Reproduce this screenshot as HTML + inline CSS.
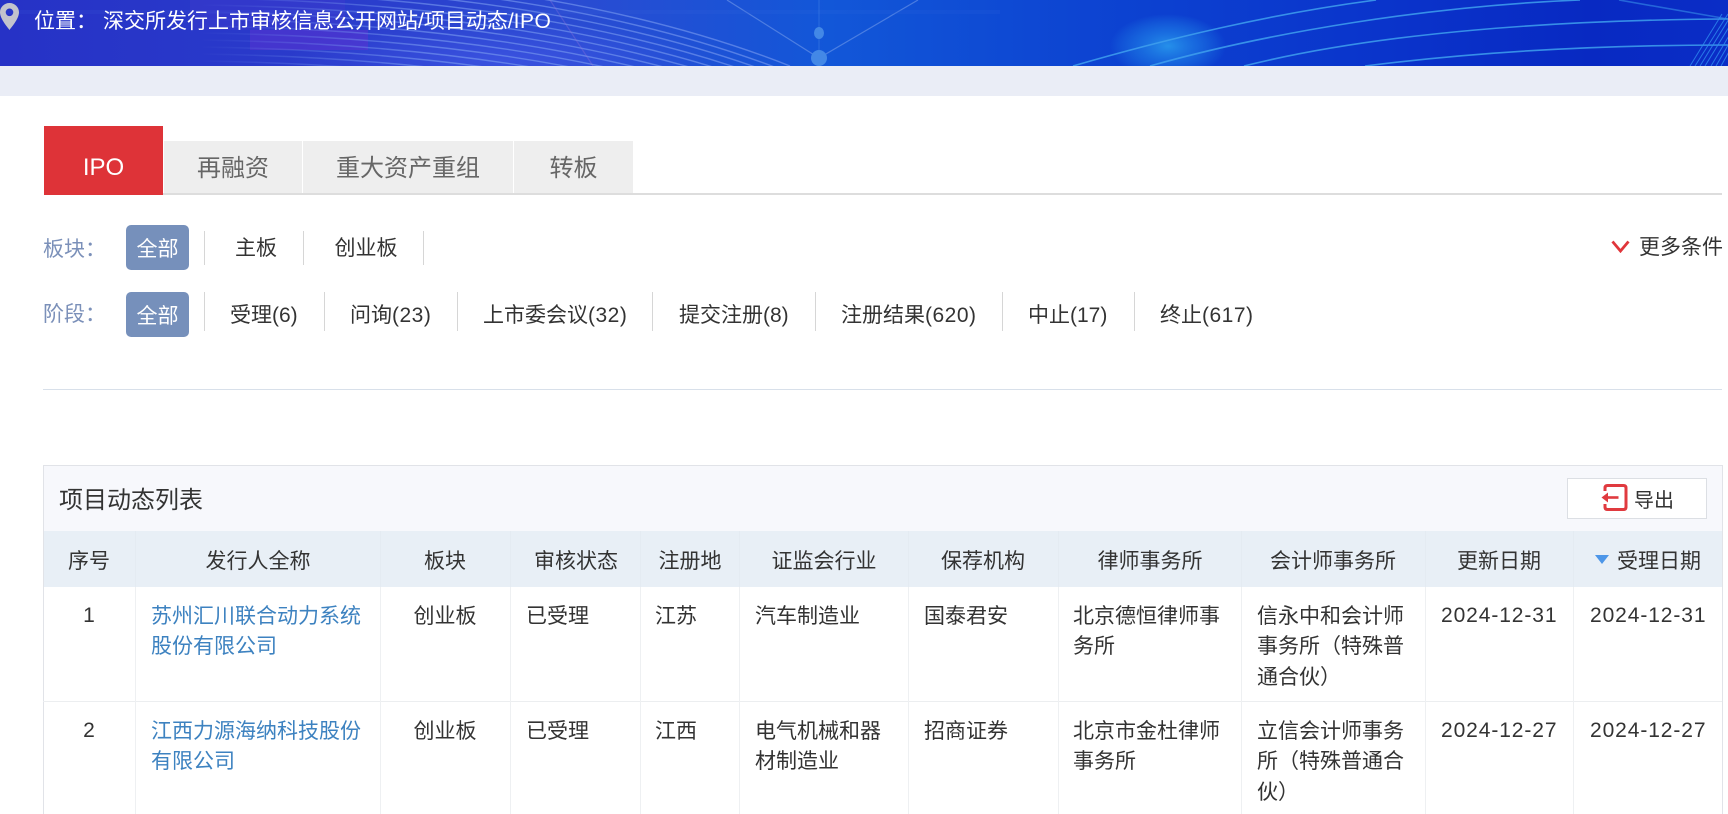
<!DOCTYPE html>
<html lang="zh-CN">
<head>
<meta charset="utf-8">
<title>项目动态</title>
<style>
html,body{margin:0;padding:0;background:#fff;}
body{width:1728px;height:814px;overflow:hidden;position:relative;font-family:"Liberation Sans","Noto Sans CJK SC",sans-serif;font-size:21px;color:#333;}
.a,.t,.c,.b{position:absolute;}
.t{white-space:nowrap;line-height:30px;}
.c{white-space:nowrap;line-height:30px;transform:translateX(-50%);}
.v{position:absolute;width:1px;background:#d6d6d6;}
.g{position:absolute;width:1px;background:#eef0f2;top:587px;height:227px;}
.h{position:absolute;width:1px;background:#e4ebf2;top:531px;height:56px;}
.tab{position:absolute;top:141px;height:52px;background:#eeeeee;color:#666;font-size:24px;line-height:56px;text-align:center;}
.btn{position:absolute;left:126px;width:63px;height:45px;background:#7690bb;border-radius:5px;color:#fff;text-align:center;line-height:49px;}
.l{color:#7b90b9;}
.k{color:#3d82c0;}
.n{letter-spacing:.5px;}
.d{letter-spacing:.9px;}
.m{line-height:30.4px;}
</style>
</head>
<body>
<svg class="a" style="left:0;top:0" width="1728" height="66" viewBox="0 0 1728 66" fill="none">
<defs>
<linearGradient id="bg" x1="0" x2="1" y1="0" y2="0">
<stop offset="0" stop-color="#2632c6"/>
<stop offset=".2" stop-color="#2a3ccc"/>
<stop offset=".33" stop-color="#2a4bd2"/>
<stop offset=".48" stop-color="#1257d8"/>
<stop offset=".62" stop-color="#0d45d2"/>
<stop offset=".8" stop-color="#0a34cb"/>
<stop offset=".92" stop-color="#0829c2"/>
<stop offset="1" stop-color="#0a2dc6"/>
</linearGradient>
<linearGradient id="sg" gradientUnits="userSpaceOnUse" x1="200" x2="430" y1="0" y2="0"><stop offset="0" stop-color="#7a9cf0" stop-opacity="0"/><stop offset="1" stop-color="#7a9cf0" stop-opacity=".6"/></linearGradient>
<radialGradient id="gl"><stop offset="0" stop-color="#2590ea"/><stop offset=".5" stop-color="#1c78e4" stop-opacity=".7"/><stop offset="1" stop-color="#1f82e6" stop-opacity="0"/></radialGradient>
<radialGradient id="gp"><stop offset="0" stop-color="#3f55e4" stop-opacity=".75"/><stop offset="1" stop-color="#3f55e4" stop-opacity="0"/></radialGradient>
</defs>
<rect width="1728" height="66" fill="url(#bg)"/>
<ellipse cx="500" cy="60" rx="210" ry="40" fill="url(#gp)"/>
<ellipse cx="1168" cy="46" rx="58" ry="32" fill="url(#gl)"/>
<rect x="190" y="0" width="155" height="30" fill="#4e38ce" opacity=".25"/>
<rect x="250" y="30" width="118" height="20" fill="#5f30d2" opacity=".5"/>
<g stroke="url(#sg)" stroke-width="1.4">
<path d="M200 -30Q560 -25 790 66"/>
<path d="M200 -23Q560 -18 790 73"/>
<path d="M200 -16Q560 -11 790 80"/>
<path d="M200 -9Q560 -4 790 87"/>
<path d="M200 -2Q560 3 790 94"/>
<path d="M200 5Q560 10 790 101"/>
<path d="M200 12Q560 17 790 108"/>
<path d="M200 19Q560 24 790 115"/>
<path d="M200 26Q560 31 790 122"/>
<path d="M200 33Q560 38 790 129"/>
<path d="M200 40Q560 45 790 136"/>
<path d="M200 47Q560 52 790 143"/>
<path d="M200 54Q560 59 790 150"/>
<path d="M200 61Q560 66 790 157"/>
</g>
<g stroke="#8fb0f0" stroke-width="1.2" opacity=".45">
<path d="M727 0L819 58L918 0"/>
<path d="M550 0L593 66" stroke="#9a78dc" opacity=".7"/>
<path d="M0 12H1000" stroke="#4a7ae8" opacity=".2" stroke-width="4"/>
</g>
<path d="M819 0V66" stroke="#5a96ec" stroke-width="1" opacity=".35"/>
<g fill="#4388e6">
<ellipse cx="819" cy="33" rx="5" ry="6"/>
<circle cx="819" cy="58" r="8"/>
</g>
<g stroke-width="1.6" stroke="#3fa0ee" opacity=".85">
<path d="M1073 66C1170 38 1270 14 1376 0"/>
<path d="M1150 66C1270 32 1430 6 1580 0"/>
<path d="M1244 66C1380 32 1560 20 1728 19"/>
<path d="M1365 66C1490 50 1610 45 1728 45"/>
<path d="M1619 0L1728 19" opacity=".6"/>
</g>
<g stroke="#2f8cf0" stroke-width="1" opacity=".8">
<path d="M1690 66L1722 14M1695 66L1728 14M1700 66L1732 14M1705 66L1737 14M1711 66L1742 14M1716 66L1746 14M1721 66L1750 14"/>
</g>
</svg>
<svg class="a" style="left:0;top:3px" width="20" height="28" viewBox="0 0 20 28"><path fill-rule="evenodd" d="M9.5 0C14.8 0 19 4.100 19 9.300C19 15.500 12.500 23 9.500 27C6.500 23 0 15.500 0 9.300C0 4.100 4.200 0 9.500 0ZM9.500 5.500A3.800 3.800 0 1 0 9.500 13.100A3.800 3.800 0 0 0 9.500 5.500Z" fill="#c2c3cd"/></svg>
<span class="t" style="left:34px;top:7px;color:#fff">位置：</span>
<span class="t" style="left:103px;top:7px;color:#fff">深交所发行上市审核信息公开网站/项目动态/<span class="n">IPO</span></span>

<div class="a" style="left:0;top:66px;width:1728px;height:30px;background:#eaedf6"></div>

<div class="a" style="left:44px;top:193px;width:1678px;height:2px;background:#dddddd"></div>
<div class="a" style="left:44px;top:126px;width:119px;height:69px;background:#de3338;color:#fff;font-size:24px;line-height:83px;text-align:center">IPO</div>
<div class="tab" style="left:164px;width:138px">再融资</div>
<div class="tab" style="left:303px;width:210px">重大资产重组</div>
<div class="tab" style="left:514px;width:119px">转板</div>

<span class="t l" style="left:43px;top:235px">板块：</span>
<div class="btn" style="top:225px">全部</div>
<div class="v" style="left:204px;top:231px;height:34px"></div>
<span class="c" style="left:256px;top:234px">主板</span>
<div class="v" style="left:303px;top:231px;height:34px"></div>
<span class="c" style="left:366px;top:234px">创业板</span>
<div class="v" style="left:423px;top:231px;height:34px"></div>

<svg class="a" style="left:1611px;top:240px" width="19" height="13" viewBox="0 0 19 13" fill="none"><path d="M1.500 1.500L9.500 11L17.500 1.500" stroke="#e0353a" stroke-width="2.800"/></svg>
<span class="t" style="left:1639px;top:233px">更多条件</span>

<span class="t l" style="left:43px;top:300px">阶段：</span>
<div class="btn" style="top:292px">全部</div>
<div class="v" style="left:204px;top:292px;height:39px"></div>
<span class="t" style="left:230px;top:301px">受理(6)</span>
<div class="v" style="left:324px;top:292px;height:39px"></div>
<span class="t" style="left:350px;top:301px">问询<span class="n">(23)</span></span>
<div class="v" style="left:457px;top:292px;height:39px"></div>
<span class="t" style="left:483px;top:301px">上市委会议<span class="n">(32)</span></span>
<div class="v" style="left:652px;top:292px;height:39px"></div>
<span class="t" style="left:679px;top:301px">提交注册(8)</span>
<div class="v" style="left:815px;top:292px;height:39px"></div>
<span class="t" style="left:841px;top:301px">注册结果<span class="n">(620)</span></span>
<div class="v" style="left:1002px;top:292px;height:39px"></div>
<span class="t" style="left:1028px;top:301px">中止(17)</span>
<div class="v" style="left:1134px;top:292px;height:39px"></div>
<span class="t" style="left:1160px;top:301px">终止<span class="n">(617)</span></span>

<div class="a" style="left:43px;top:389px;width:1679px;height:1px;background:#d8e0ea"></div>

<div class="a" style="left:43px;top:465px;width:1679px;height:349px;background:#fff"></div>
<div class="a" style="left:43px;top:465px;width:1679px;height:66px;background:#f7f8fc"></div>
<div class="a" style="left:43px;top:531px;width:1679px;height:56px;background:#e8eff6"></div>
<div class="a" style="left:43px;top:465px;width:1680px;height:1px;background:#e1e3e8"></div>
<div class="a" style="left:43px;top:465px;width:1px;height:349px;background:#e1e3e8"></div>
<div class="a" style="left:1722px;top:465px;width:1px;height:349px;background:#e1e3e8"></div>
<div class="a" style="left:43px;top:701px;width:1679px;height:1px;background:#eceef0"></div>

<span class="t" style="left:59px;top:486px;font-size:24px">项目动态列表</span>
<div class="a" style="left:1567px;top:478px;width:138px;height:39px;background:#fff;border:1px solid #dcdfe4"></div>
<svg class="a" style="left:1601px;top:484px" width="27" height="27" viewBox="0 0 27 27" fill="none">
<path d="M4 7V4Q4 1.500 6.500 1.500H22.500Q25 1.500 25 4V23Q25 25.500 22.500 25.500H6.500Q4 25.500 4 23V20" stroke="#e03a3f" stroke-width="3"/>
<path d="M3 13.500H17.500" stroke="#e03a3f" stroke-width="2.600"/>
<path d="M0.500 13.500L7 8.500V18.500Z" fill="#e03a3f"/>
</svg>
<span class="t" style="left:1634px;top:486px;font-size:20px">导出</span>

<div class="h" style="left:135px"></div><div class="h" style="left:380px"></div><div class="h" style="left:510px"></div><div class="h" style="left:640px"></div><div class="h" style="left:739px"></div><div class="h" style="left:908px"></div><div class="h" style="left:1058px"></div><div class="h" style="left:1241px"></div><div class="h" style="left:1425px"></div><div class="h" style="left:1573px"></div>
<div class="g" style="left:135px"></div><div class="g" style="left:380px"></div><div class="g" style="left:510px"></div><div class="g" style="left:640px"></div><div class="g" style="left:739px"></div><div class="g" style="left:908px"></div><div class="g" style="left:1058px"></div><div class="g" style="left:1241px"></div><div class="g" style="left:1425px"></div><div class="g" style="left:1573px"></div>

<span class="c" style="left:89px;top:547px">序号</span>
<span class="c" style="left:258px;top:547px">发行人全称</span>
<span class="c" style="left:445px;top:547px">板块</span>
<span class="c" style="left:576px;top:547px">审核状态</span>
<span class="c" style="left:690px;top:547px">注册地</span>
<span class="c" style="left:824px;top:547px">证监会行业</span>
<span class="c" style="left:983px;top:547px">保荐机构</span>
<span class="c" style="left:1150px;top:547px">律师事务所</span>
<span class="c" style="left:1333px;top:547px">会计师事务所</span>
<span class="c" style="left:1499px;top:547px">更新日期</span>
<svg class="a" style="left:1595px;top:555px" width="14" height="9" viewBox="0 0 14 9"><path d="M0 0H14L7 9Z" fill="#4d96e8"/></svg>
<span class="t" style="left:1617px;top:547px">受理日期</span>

<span class="c" style="left:89px;top:601px">1</span>
<span class="t k m" style="left:151px;top:602px">苏州汇川联合动力系统<br>股份有限公司</span>
<span class="c" style="left:445px;top:602px">创业板</span>
<span class="t" style="left:526px;top:602px">已受理</span>
<span class="t" style="left:655px;top:602px">江苏</span>
<span class="t" style="left:755px;top:602px">汽车制造业</span>
<span class="t" style="left:924px;top:602px">国泰君安</span>
<span class="t m" style="left:1073px;top:602px">北京德恒律师事<br>务所</span>
<span class="t m" style="left:1257px;top:602px">信永中和会计师<br>事务所（特殊普<br>通合伙）</span>
<span class="t d" style="left:1441px;top:601px">2024-12-31</span>
<span class="t d" style="left:1590px;top:601px">2024-12-31</span>

<span class="c" style="left:89px;top:716px">2</span>
<span class="t k m" style="left:151px;top:717px">江西力源海纳科技股份<br>有限公司</span>
<span class="c" style="left:445px;top:717px">创业板</span>
<span class="t" style="left:526px;top:717px">已受理</span>
<span class="t" style="left:655px;top:717px">江西</span>
<span class="t m" style="left:755px;top:717px">电气机械和器<br>材制造业</span>
<span class="t" style="left:924px;top:717px">招商证券</span>
<span class="t m" style="left:1073px;top:717px">北京市金杜律师<br>事务所</span>
<span class="t m" style="left:1257px;top:717px">立信会计师事务<br>所（特殊普通合<br>伙）</span>
<span class="t d" style="left:1441px;top:716px">2024-12-27</span>
<span class="t d" style="left:1590px;top:716px">2024-12-27</span>
</body>
</html>
